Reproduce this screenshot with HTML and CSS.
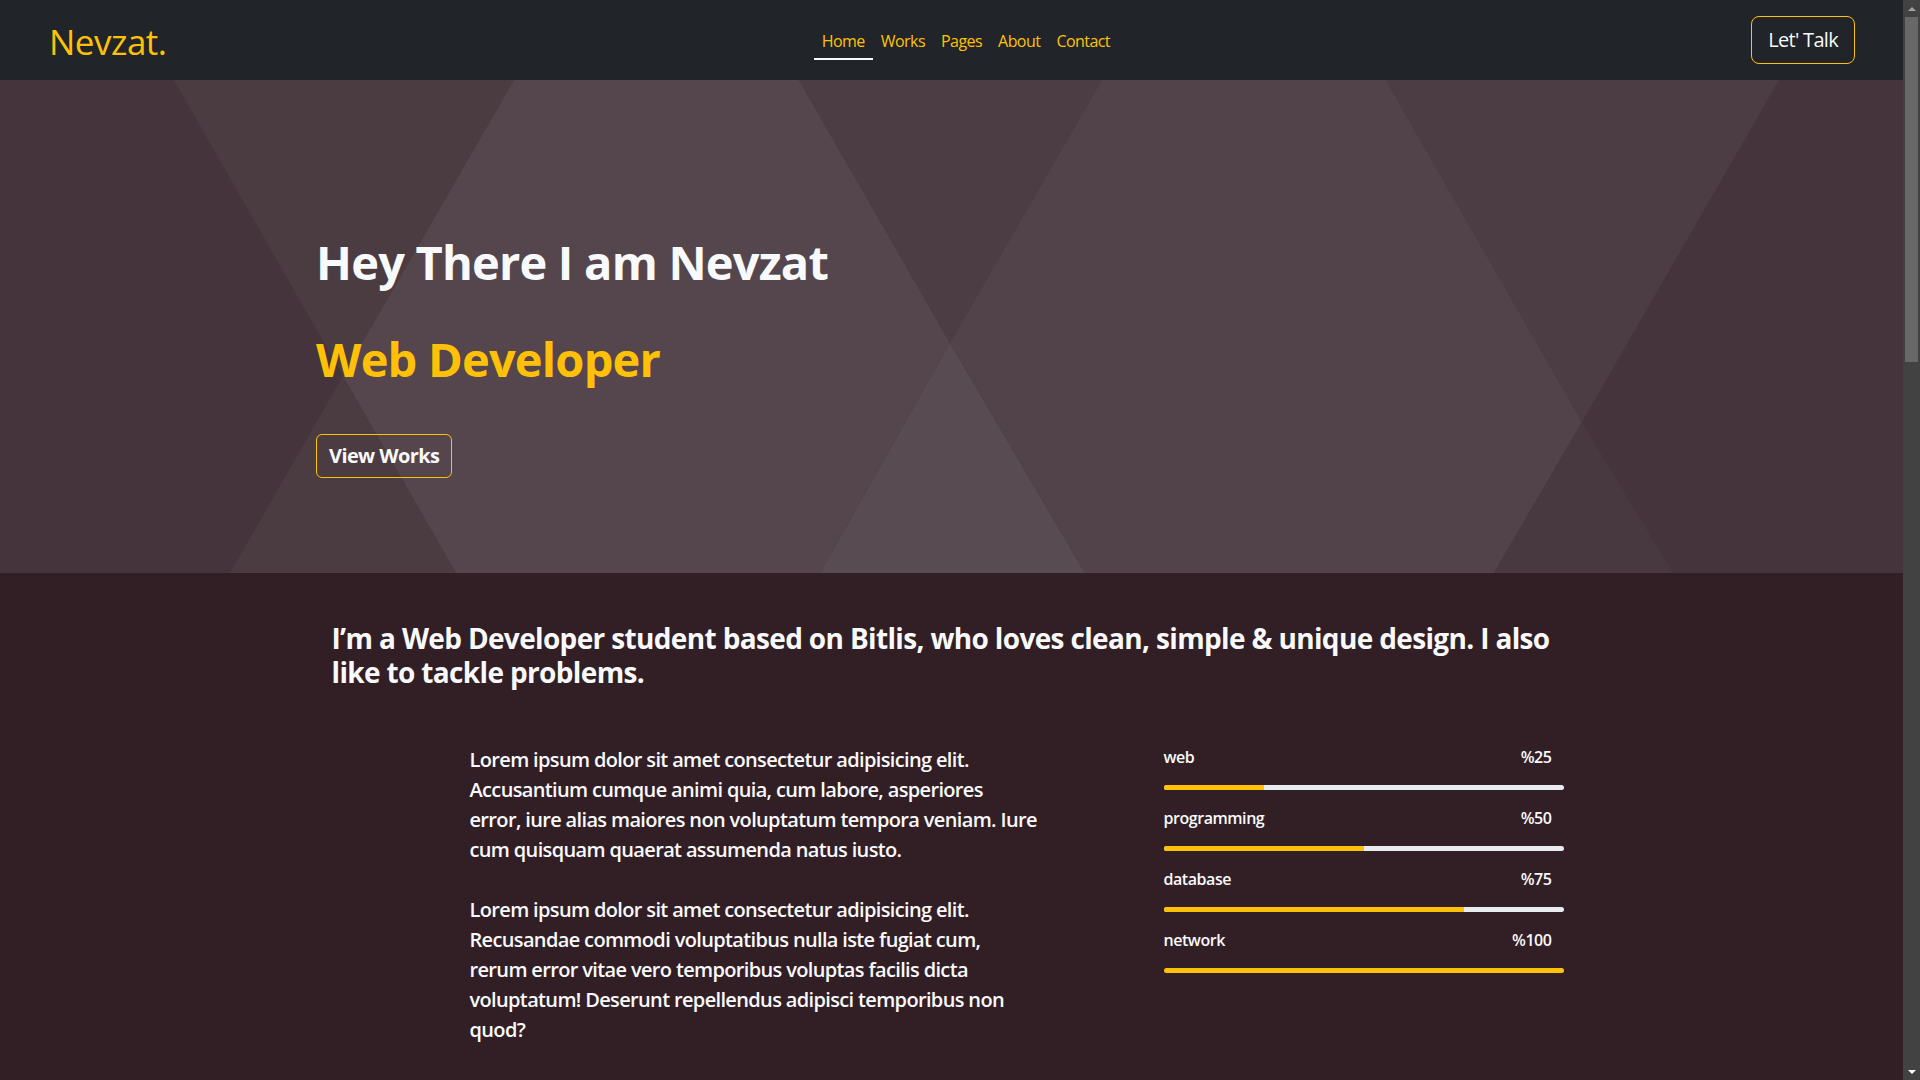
FILE: index.html
```html
<!DOCTYPE html>
<html lang="en">
<head>
<meta charset="utf-8">
<title>Nevzat.</title>
<link rel="stylesheet" href="styles.css">
</head>
<body>
<header class="navbar">
  <a class="brand" href="#">Nevzat.</a>
  <nav class="nav">
    <a class="nav-link active" href="#">Home</a>
    <a class="nav-link" href="#">Works</a>
    <a class="nav-link" href="#">Pages</a>
    <a class="nav-link" href="#">About</a>
    <a class="nav-link" href="#">Contact</a>
  </nav>
  <a class="btn-talk" href="#">Let' Talk</a>
</header>

<section class="hero">
  <svg class="hero-bg" viewBox="0 0 1903 493" preserveAspectRatio="none" aria-hidden="true">
    <rect x="0" y="0" width="1903" height="493" fill="#45343b"/>
    <polygon points="174,0 514,0 343,296" fill="#4b3c42"/>
    <polygon points="343,296 456,493 230,493" fill="#4b3c42"/>
    <polygon points="514,0 799,0 950,263 820,493 456,493 343,296" fill="#54464c"/>
    <polygon points="799,0 1102,0 950,263" fill="#4c3d44"/>
    <polygon points="950,263 1085,493 820,493" fill="#584b51"/>
    <polygon points="1102,0 1386,0 1582,342 1494,493 1085,493 950,263" fill="#52434a"/>
    <polygon points="1386,0 1779,0 1582,342" fill="#4c3c43"/>
    <polygon points="1582,342 1673,493 1494,493" fill="#483840"/>
  </svg>
  <div class="hero-content">
    <h1 class="hero-title">Hey There I am Nevzat</h1>
    <h2 class="hero-sub">Web Developer</h2>
    <a class="btn-works" href="#">View Works</a>
  </div>
</section>

<section class="about">
  <div class="about-container">
    <h3 class="about-lead">I’m a Web Developer student based on Bitlis, who loves clean, simple &amp; unique design. I also like to tackle problems.</h3>
    <div class="about-row">
      <div class="about-text">
        <p>Lorem ipsum dolor sit amet consectetur adipisicing elit.<br>Accusantium cumque animi quia, cum labore, asperiores<br>error, iure alias maiores non voluptatum tempora veniam. Iure<br>cum quisquam quaerat assumenda natus iusto.</p>
        <p>Lorem ipsum dolor sit amet consectetur adipisicing elit.<br>Recusandae commodi voluptatibus nulla iste fugiat cum,<br>rerum error vitae vero temporibus voluptas facilis dicta<br>voluptatum! Deserunt repellendus adipisci temporibus non<br>quod?</p>
      </div>
      <div class="skills">
        <div class="skill">
          <div class="skill-head"><span>web</span><span>%25</span></div>
          <div class="bar"><div class="bar-fill" style="width:25%"></div></div>
        </div>
        <div class="skill">
          <div class="skill-head"><span>programming</span><span>%50</span></div>
          <div class="bar"><div class="bar-fill" style="width:50%"></div></div>
        </div>
        <div class="skill">
          <div class="skill-head"><span>database</span><span>%75</span></div>
          <div class="bar"><div class="bar-fill" style="width:75%"></div></div>
        </div>
        <div class="skill">
          <div class="skill-head"><span>network</span><span>%100</span></div>
          <div class="bar"><div class="bar-fill" style="width:100%"></div></div>
        </div>
      </div>
    </div>
  </div>
</section>

<div class="scrollbar" aria-hidden="true">
  <span class="sb-arrow sb-up"></span>
  <span class="sb-thumb"></span>
  <span class="sb-arrow sb-down"></span>
</div>
</body>
</html>
```

FILE: styles.css
```css
* { box-sizing: border-box; }

html { background: #321f26; }

body {
  margin: 0 17px 0 0;
  font-family: "Open Sans", "Noto Sans", sans-serif;
  color: #f8f9fa;
  background: #321f26;
}

a { text-decoration: none; }

/* Scrollbar (window chrome) */
.scrollbar {
  position: fixed;
  top: 0;
  right: 0;
  width: 17px;
  height: 100vh;
  background: #424242;
  display: flex;
  flex-direction: column;
}

.sb-arrow {
  flex: none;
  height: 17px;
  display: flex;
  align-items: center;
  justify-content: center;
}

.sb-up::before {
  content: "";
  border-left: 4px solid transparent;
  border-right: 4px solid transparent;
  border-bottom: 4px solid #a3a3a3;
}

.sb-down { margin-top: auto; }

.sb-down::before {
  content: "";
  border-left: 4px solid transparent;
  border-right: 4px solid transparent;
  border-top: 4px solid #ffffff;
}

.sb-thumb {
  flex: none;
  height: 345px;
  margin: 0 2px;
  background: #686868;
}

/* Navbar */
.navbar {
  height: 80px;
  background: #212529;
  display: flex;
  align-items: center;
  padding: 0 48px 0 49px;
}

.brand {
  color: #ffc107;
  font-size: 35px;
  line-height: 1;
  letter-spacing: -0.5px;
  margin-top: 2px;
}

.nav {
  display: flex;
  margin: 0 auto;
  padding-top: 2px;
  padding-left: 14px;
}

.nav-link {
  color: #ffc107;
  font-size: 16px;
  line-height: 24px;
  padding: 7px 8px 5px;
  border-bottom: 2px solid transparent;
  letter-spacing: -0.55px;
}

.nav-link.active { border-bottom-color: #f8f9fa; }

.btn-talk {
  color: #f8f9fa;
  font-size: 20px;
  line-height: 30px;
  padding: 8px 16px;
  border: 1px solid #ffc107;
  border-radius: 8px;
  letter-spacing: -0.7px;
}

/* Hero */
.hero {
  position: relative;
  height: 493px;
  overflow: hidden;
}

.hero-bg {
  position: absolute;
  inset: 0;
  width: 100%;
  height: 100%;
  display: block;
}

.hero-content {
  position: relative;
  display: flex;
  flex-direction: column;
  align-items: flex-start;
  padding: 154px 0 0 316px;
}

.hero-title,
.hero-sub {
  margin: 0;
  font-size: 47px;
  line-height: 1.2;
  font-weight: 700;
  letter-spacing: -0.8px;
}

.hero-title { color: #f8f9fa; }

.hero-sub {
  color: #ffc107;
  margin-top: 41px;
}

.btn-works {
  margin-top: 46px;
  color: #f8f9fa;
  font-size: 20px;
  font-weight: 700;
  line-height: 30px;
  padding: 6px 12px;
  border: 1px solid #ffc107;
  border-radius: 6px;
  letter-spacing: -0.6px;
}

/* About */
.about {
  min-height: 560px;
}

.about-container {
  width: 1240px;
  margin: 0 auto;
  padding-top: 49px;
}

.about-lead {
  margin: 0;
  font-size: 28px;
  line-height: 1.2;
  font-weight: 700;
  letter-spacing: -0.65px;
}

.about-row {
  display: flex;
  align-items: flex-start;
  padding-left: 138px;
  padding-right: 8px;
  margin-top: 56px;
}

.about-text {
  flex: 0 0 600px;
  white-space: nowrap;
}

.about-text p {
  margin: 0 0 30px;
  font-size: 20px;
  line-height: 30px;
  font-weight: 600;
  letter-spacing: -0.65px;
}

.skills {
  width: 400px;
  margin-left: auto;
}

.skill {
  margin-bottom: 16px;
}

.skill-head {
  display: flex;
  justify-content: space-between;
  padding-right: 12px;
  margin-bottom: 16px;
  font-size: 16px;
  line-height: 24px;
  font-weight: 600;
  letter-spacing: -0.45px;
}

.bar {
  height: 5px;
  border-radius: 3px;
  background: #e9ecef;
  overflow: hidden;
}

.bar-fill {
  height: 100%;
  background: #ffc107;
}
```
